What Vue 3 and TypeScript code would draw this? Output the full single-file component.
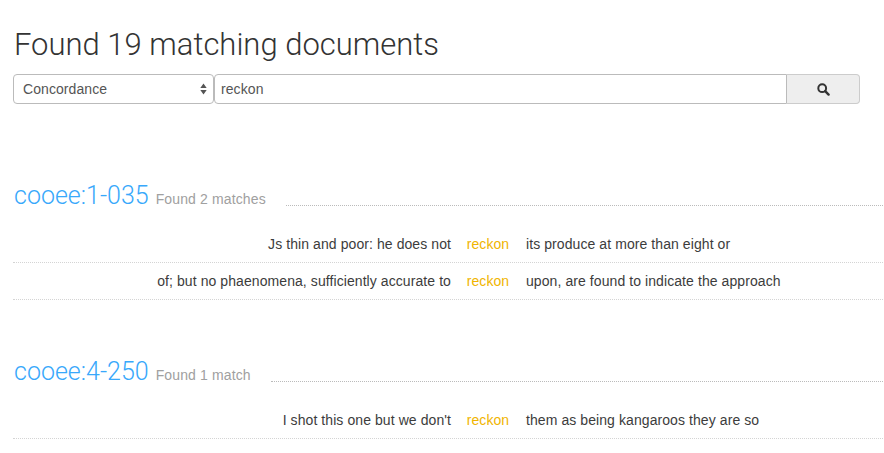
<script setup lang="ts">
interface Row { left: string; key: string; right: string }
interface Doc { id: string; found: string; rows: Row[] }
const docs: Doc[] = [
  { id: 'cooee:1-035', found: 'Found 2 matches', rows: [
    { left: 'Js thin and poor: he does not', key: 'reckon', right: 'its produce at more than eight or' },
    { left: 'of; but no phaenomena, sufficiently accurate to', key: 'reckon', right: 'upon, are found to indicate the approach' },
  ]},
  { id: 'cooee:4-250', found: 'Found 1 match', rows: [
    { left: "I shot this one but we don't", key: 'reckon', right: 'them as being kangaroos they are so' },
  ]},
];
</script>

<template>
  <main class="page">
    <h1 class="title">Found 19 matching documents</h1>
    <form class="search" @submit.prevent>
      <div class="select">
        <span>Concordance</span>
        <svg class="updown" width="7" height="12" viewBox="0 0 7 12"><path d="M3.5 0.5L6.7 5H0.3zM3.5 11.5L0.3 7H6.7z" fill="#555"/></svg>
      </div>
      <input class="input" value="reckon" />
      <button class="btn" type="button" aria-label="Search">
        <svg width="13" height="13" viewBox="0 0 13 13"><circle cx="5.2" cy="5.2" r="3.9" fill="none" stroke="#333" stroke-width="2"/><path d="M8.2 8.2L11.6 11.6" stroke="#333" stroke-width="2.4" stroke-linecap="round"/></svg>
      </button>
    </form>
    <section v-for="d in docs" :key="d.id" class="doc">
      <header class="doc-head">
        <a class="doc-id">{{ d.id }}</a>
        <span class="found">{{ d.found }}</span>
        <span class="leader"></span>
      </header>
      <div class="rows">
        <div v-for="r in d.rows" :key="r.left" class="row">
          <span class="left">{{ r.left }}</span>
          <span class="key">{{ r.key }}</span>
          <span class="right">{{ r.right }}</span>
        </div>
      </div>
    </section>
  </main>
</template>

<style scoped>
.page { box-sizing: border-box; width: 883px; height: 453px; overflow: hidden; padding: 28px 0 0 13px; font-family: "Liberation Sans", Arial, sans-serif; color: #3c3c3c; }
.title { margin: 0 0 13px 1px; font-family: Roboto, "Liberation Sans", sans-serif; font-weight: 300; font-size: 31px; line-height: 33px; color: #333; }
.search { display: flex; width: 847px; height: 30px; font-size: 14px; letter-spacing: 0.08px; color: #555; }
.select { box-sizing: border-box; width: 201px; display: flex; align-items: center; justify-content: space-between; padding: 0 6px 0 9px; border: 1px solid #bbb; border-radius: 4px; background: #fff; }
.input { box-sizing: border-box; flex: 1; min-width: 0; height: 30px; padding: 0 6px; border: 1px solid #bbb; border-radius: 4px 0 0 4px; font: inherit; letter-spacing: 0.08px; color: #555; outline: none; }
.btn { box-sizing: border-box; width: 73px; height: 30px; padding: 0; display: flex; align-items: center; justify-content: center; border: 1px solid #ccc; border-left: 0; border-radius: 0 4px 4px 0; background: #eee; }
.doc { margin-top: 77px; }
.doc + .doc { margin-top: 57px; }
.doc-head { display: flex; align-items: baseline; height: 26px; }
.doc-id { margin-left: 1px; font-family: Roboto, "Liberation Sans", sans-serif; font-weight: 300; font-size: 25px; color: #38a8fb; }
.found { margin-left: 7px; font-size: 14px; letter-spacing: 0.13px; color: #a0a0a0; }
.leader { flex: 1; margin-left: 20px; border-bottom: 1px dotted #bbb; align-self: flex-end; margin-bottom: 1px; }
.rows { margin-top: 19px; font-size: 14px; letter-spacing: 0.08px; }
.row { display: grid; grid-template-columns: 438px 74px 1fr; height: 37px; box-sizing: border-box; align-items: center; border-bottom: 1px dotted #d4d4d4; line-height: 20px; }
.left { text-align: right; }
.key { text-align: center; color: #f0b400; }
.right { padding-left: 1px; }
</style>
